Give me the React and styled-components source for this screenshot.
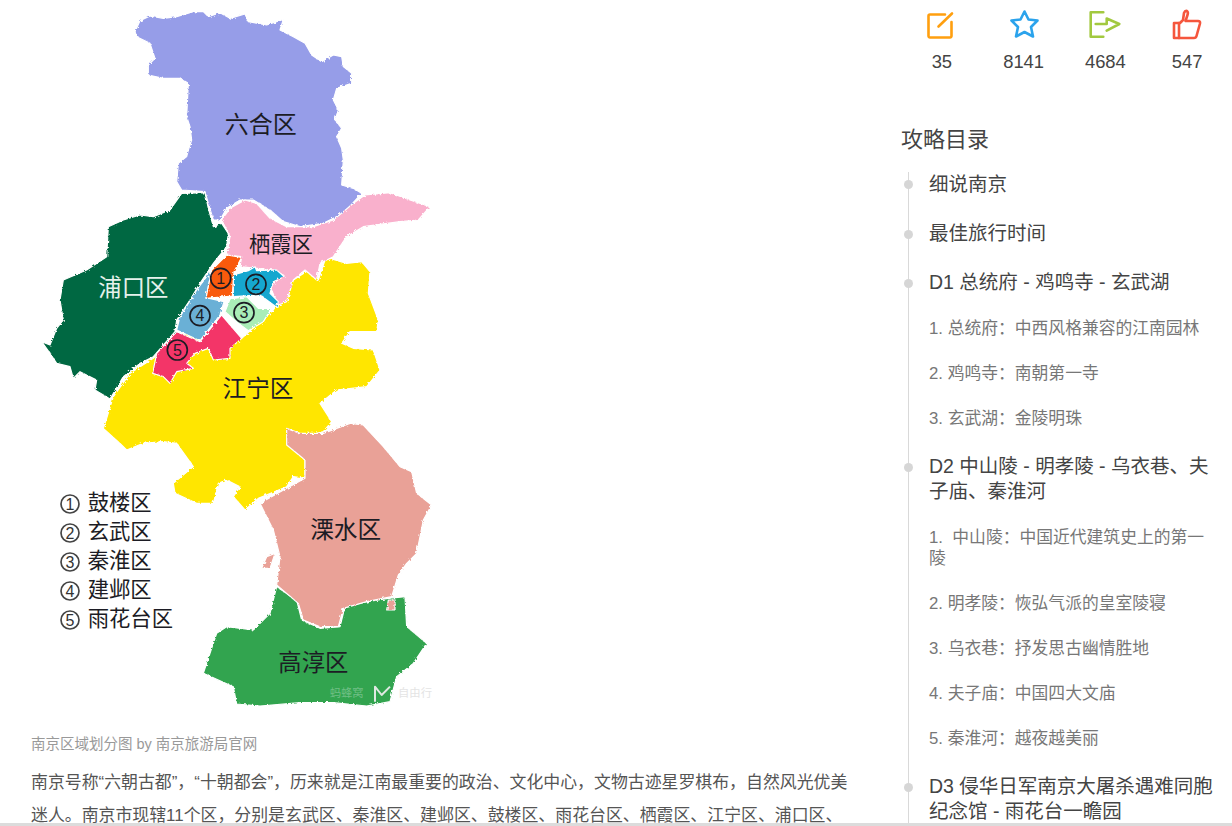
import React from 'react';
import styled, { createGlobalStyle } from 'styled-components';

const FONT = `"Liberation Sans", "Noto Sans CJK SC", sans-serif`;

const GlobalStyle = createGlobalStyle`
    html, body {
        margin: 0;
        padding: 0;
        height: 100%;
        overflow: hidden;
        background: #fff;
    }
    body {
        font-family: ${FONT};
    }
`;

const Page = styled.div`
    display: flex;
    height: 826px;
    overflow: hidden;
`;
const Article = styled.main`
    width: 901px;
    flex: none;
`;
const MapFigure = styled.figure`
    margin: 0;
`;
const MapSvg = styled.svg`
    display: block;
    width: 450px;
    height: 720px;
`;
const Region = styled.polygon`
    stroke: #fff;
    stroke-width: 3.5;
    stroke-linejoin: round;
`;
const MapLabel = styled.text`
    font-family: ${FONT};
    font-size: ${p => p.$size || 70}px;
    fill: ${p => p.$light ? '#e6f2ec' : '#1c1c24'};
    text-anchor: ${p => p.$start ? 'start' : 'middle'};
    dominant-baseline: central;
`;
const Mark = styled.circle`
    fill: none;
    stroke: ${p => p.$grey ? '#444' : '#1c1c24'};
    stroke-width: 5;
`;
const MarkDigit = styled.text`
    font-family: ${FONT};
    font-size: 48px;
    fill: ${p => p.$grey ? '#333' : '#1c1c24'};
    text-anchor: middle;
    dominant-baseline: central;
`;
const Watermark = styled.text`
    font-family: ${FONT};
    font-size: 34px;
    fill: ${p => p.$faint ? '#e4e4e4' : '#6fbf85'};
    text-anchor: middle;
    dominant-baseline: central;
`;
const WatermarkLogo = styled.path`
    fill: none;
    stroke: #dfe9e2;
    stroke-width: 6;
    stroke-linejoin: round;
`;
const Caption = styled.figcaption`
    margin: 14px 0 0 31px;
    font-size: 14.5px;
    line-height: 20px;
    color: #999;
`;
const Paragraph = styled.p`
    margin: 12px 0 0 31px;
    width: 825px;
    font-size: 16.9px;
    line-height: 33px;
    color: #555;
`;
const Sidebar = styled.aside`
    flex: 1;
    padding-top: 8px;
`;
const Stats = styled.div`
    display: flex;
    width: 327px;
`;
const Stat = styled.div`
    flex: 1;
    display: flex;
    flex-direction: column;
    align-items: center;
`;
const StatIcon = styled.svg`
    width: 32px;
    height: 32px;
    fill: none;
    stroke: ${p => p.$color};
    stroke-width: 2.6;
    stroke-linejoin: round;
    stroke-linecap: round;
`;
const StatCount = styled.div`
    margin-top: 10px;
    font-size: 18.4px;
    line-height: 24px;
    color: #444;
`;
const TocTitle = styled.h2`
    margin: 51px 0 17px;
    font-size: 22px;
    line-height: 30px;
    font-weight: 400;
    color: #444;
`;
const Toc = styled.ul`
    margin: 0 0 0 7px;
    padding: 0 20px 0 20px;
    list-style: none;
    border-left: 1px solid #d9d9d9;
    width: 284px;
`;
const TocMain = styled.li`
    position: relative;
    padding: 13px 0 11px;
    font-size: 19.5px;
    line-height: 25px;
    color: #444;

    &::before {
        content: "";
        position: absolute;
        left: -25px;
        top: 22px;
        width: 9px;
        height: 9px;
        border-radius: 50%;
        background: #d6d6d6;
    }
    &:first-child {
        padding-top: 0;
    }
    &:first-child::before {
        top: 8px;
    }
`;
const TocSub = styled.li`
    padding: 12px 0;
    font-size: 16.8px;
    line-height: 21px;
    color: #777;
`;
const ScrollBar = styled.div`
    position: fixed;
    left: 0;
    right: 0;
    bottom: 0;
    height: 3px;
    background: #dcdcdc;
`;

// all map coordinates are in 3x picture units
const regions = [
    {
        fill: '#ffe600',
        points: '990,775 1040,790 1085,785 1110,815 1105,880 1135,960 1130,995 1050,995 1025,1030 1060,1045 1120,1050 1140,1110 1100,1160 1010,1170 960,1210 995,1265 970,1295 915,1310 915,1380 915,1435 880,1430 860,1460 775,1495 735,1530 700,1490 720,1460 680,1440 655,1450 640,1510 590,1510 525,1480 520,1450 580,1400 530,1330 490,1325 430,1330 380,1350 360,1330 310,1285 320,1255 340,1190 390,1120 460,1075 530,1000 725,1015 820,930 880,840 950,795 955,840 975,780',
    },
    {
        fill: '#969de8',
        points: '405,95 420,62 450,48 490,55 530,50 580,35 610,35 625,50 660,38 690,55 735,42 745,65 800,75 850,58 840,90 880,110 915,130 935,165 965,185 1000,165 1025,170 1030,200 1055,220 1055,250 1010,265 1000,300 1015,330 1005,360 1025,385 1010,410 1025,445 1030,480 1025,555 1060,565 1085,580 1030,640 970,670 900,680 850,665 810,630 760,600 720,600 680,625 660,660 640,660 625,610 615,575 545,570 530,545 535,490 560,470 565,450 575,420 570,380 560,350 565,250 540,235 490,235 445,225 445,195 465,175 450,130 410,110',
    },
    {
        fill: '#046742',
        points: '545,580 615,578 625,625 640,680 665,670 685,700 680,740 640,790 600,850 570,900 530,960 525,995 460,1070 420,1090 370,1130 330,1197 285,1170 290,1140 240,1115 220,1135 210,1100 170,1090 150,1060 125,1025 150,1035 170,985 190,960 180,900 190,840 260,810 320,770 325,680 370,660 420,645 460,650 510,630',
    },
    {
        fill: '#f9b0cc',
        points: '665,660 690,625 735,600 770,610 810,655 860,680 940,680 1000,660 1060,610 1095,585 1170,578 1230,600 1290,620 1255,660 1200,665 1090,680 1040,710 1000,770 960,790 950,840 915,810 880,840 860,905 835,915 810,860 850,825 820,810 770,805 720,800 725,770 680,765 690,710',
    },
    {
        fill: '#f33567',
        points: '530,995 600,1025 665,945 725,1015 690,1045 690,1075 640,1080 625,1045 585,1060 560,1090 580,1105 530,1115 510,1150 490,1130 458,1120 470,1060',
    },
    {
        fill: '#6bb0d6',
        points: '635,810 618,893 672,905 660,945 600,1022 530,990 540,950 590,870',
    },
    {
        fill: '#f95a0d',
        points: '680,765 725,772 702,815 697,888 618,895 635,810',
    },
    {
        fill: '#18a7cf',
        points: '700,825 745,812 765,800 770,812 830,810 852,830 820,845 810,880 835,905 830,922 780,885 700,890',
    },
    {
        fill: '#a9edb7',
        points: '690,897 740,890 775,925 815,925 790,965 745,992 715,970 675,935',
    },
    {
        fill: '#33a450',
        points: '830,1760 890,1800 905,1860 960,1885 1020,1880 1035,1820 1100,1805 1165,1795 1215,1790 1220,1880 1280,1930 1240,1990 1190,2030 1170,2105 1100,2118 1000,2108 900,2108 780,2118 710,2112 700,2060 610,2020 650,1900 680,1880 760,1890 810,1840',
    },
    {
        fill: '#e9a197',
        points: '860,1285 900,1300 970,1300 1050,1270 1090,1275 1150,1340 1200,1400 1235,1415 1250,1480 1295,1515 1270,1560 1250,1660 1220,1690 1195,1725 1175,1790 1100,1805 1030,1825 1015,1880 960,1880 910,1860 895,1810 830,1755 840,1670 820,1590 780,1510 860,1465 915,1435 915,1380 860,1335',
    },
    { fill: '#e9a197', points: '825,1660 810,1705 785,1705 800,1670' },
    { fill: '#e9a197', points: '1165,1800 1185,1800 1185,1830 1160,1830' },
];

const labels = [
    { text: '六合区', x: 782, y: 372, size: 72 },
    { text: '栖霞区', x: 843, y: 736, size: 64 },
    { text: '浦口区', x: 400, y: 864, size: 70, light: true },
    { text: '江宁区', x: 774, y: 1166, size: 71 },
    { text: '溧水区', x: 1037, y: 1591, size: 71 },
    { text: '高淳区', x: 940, y: 1988, size: 70 },
];

const marks = [
    { n: 1, x: 662, y: 835 },
    { n: 2, x: 768, y: 853 },
    { n: 3, x: 732, y: 938 },
    { n: 4, x: 600, y: 947 },
    { n: 5, x: 532, y: 1050 },
];

const legend = ['鼓楼区', '玄武区', '秦淮区', '建邺区', '雨花台区'];

const stats = [
    {
        count: 35,
        color: '#ff9f0f',
        paths: ['M19 6.5H4A1.5 1.5 0 0 0 2.5 8v20A1.5 1.5 0 0 0 4 29.5h20a1.5 1.5 0 0 0 1.5-1.5V14', 'M12.5 18.5 26 5.5'],
    },
    {
        count: 8141,
        color: '#2ba3ec',
        paths: ['M16.5 3.5 20.5 11.5 29.5 12.5 23 19 25 28.5 16.5 24 8 28.5 10 19 3.5 12.5 12.5 11.5Z'],
    },
    {
        count: 4684,
        color: '#a2c93f',
        paths: ['M14.3 4.3H1.7V28.7H14.3', 'M6.7 16H17.7V10.5L30.3 16 17.7 22.7'],
    },
    {
        count: 547,
        color: '#f5563d',
        paths: ['M3 15H9L12 12 13 5Q14 2.5 16 3 17.5 4 16.5 7L14.5 13H27Q29.5 13 29 15.5L25.5 28Q25 30 23 30H3Z', 'M8 15V30'],
    },
];

const toc = [
    { main: true, text: '细说南京' },
    { main: true, text: '最佳旅行时间' },
    { main: true, text: 'D1 总统府 - 鸡鸣寺 - 玄武湖' },
    { text: '1. 总统府：中西风格兼容的江南园林' },
    { text: '2. 鸡鸣寺：南朝第一寺' },
    { text: '3. 玄武湖：金陵明珠' },
    { main: true, text: 'D2 中山陵 - 明孝陵 - 乌衣巷、夫子庙、秦淮河' },
    { text: '1.\u00a0 中山陵：中国近代建筑史上的第一陵' },
    { text: '2. 明孝陵：恢弘气派的皇室陵寝' },
    { text: '3. 乌衣巷：抒发思古幽情胜地' },
    { text: '4. 夫子庙：中国四大文庙' },
    { text: '5. 秦淮河：越夜越美丽' },
    { main: true, text: 'D3 侵华日军南京大屠杀遇难同胞纪念馆 - 雨花台一瞻园' },
];

const NanjingMap = () => (
    <MapSvg viewBox="0 0 1350 2160">
        <defs>
            <filter id="rough" x="-5%" y="-5%" width="110%" height="110%">
                <feTurbulence type="fractalNoise" baseFrequency="0.13" numOctaves="2" seed="4" result="noise" />
                <feDisplacementMap in="SourceGraphic" in2="noise" scale="10" />
            </filter>
        </defs>
        <g filter="url(#rough)">
            {regions.map(r => <Region key={r.points} fill={r.fill} points={r.points} />)}
        </g>
        {labels.map(l => (
            <MapLabel key={l.text} x={l.x} y={l.y} $size={l.size} $light={l.light}>{l.text}</MapLabel>
        ))}
        {marks.map(m => (
            <g key={m.n}>
                <Mark cx={m.x} cy={m.y} r={30} />
                <MarkDigit x={m.x} y={m.y}>{m.n}</MarkDigit>
            </g>
        ))}
        {legend.map((name, i) => {
            const y = 1510 + i * 87;
            return (
                <g key={name}>
                    <Mark $grey cx={210} cy={y + 2} r={27} />
                    <MarkDigit $grey x={210} y={y + 2}>{i + 1}</MarkDigit>
                    <MapLabel $start $size={64} x={263} y={y}>{name}</MapLabel>
                </g>
            );
        })}
        <Watermark x={1040} y={2080}>蚂蜂窝</Watermark>
        <WatermarkLogo d="M1125 2105V2060L1145 2085 1170 2060" />
        <Watermark $faint x={1245} y={2080}>自由行</Watermark>
    </MapSvg>
);

export default function App() {
    return (
        <Page>
            <GlobalStyle />
            <Article>
                <MapFigure>
                    <NanjingMap />
                    <Caption>南京区域划分图 by 南京旅游局官网</Caption>
                </MapFigure>
                <Paragraph>
                    南京号称“六朝古都”，“十朝都会”，历来就是江南最重要的政治、文化中心，文物古迹星罗棋布，自然风光优美迷人。南京市现辖11个区，分别是玄武区、秦淮区、建邺区、鼓楼区、雨花台区、栖霞区、江宁区、浦口区、
                </Paragraph>
            </Article>
            <Sidebar>
                <Stats>
                    {stats.map(s => (
                        <Stat key={s.count}>
                            <StatIcon viewBox="0 0 32 32" $color={s.color}>
                                {s.paths.map(d => <path key={d} d={d} />)}
                            </StatIcon>
                            <StatCount>{s.count}</StatCount>
                        </Stat>
                    ))}
                </Stats>
                <TocTitle>攻略目录</TocTitle>
                <Toc>
                    {toc.map(item => item.main
                        ? <TocMain key={item.text}>{item.text}</TocMain>
                        : <TocSub key={item.text}>{item.text}</TocSub>)}
                </Toc>
            </Sidebar>
            <ScrollBar />
        </Page>
    );
}
